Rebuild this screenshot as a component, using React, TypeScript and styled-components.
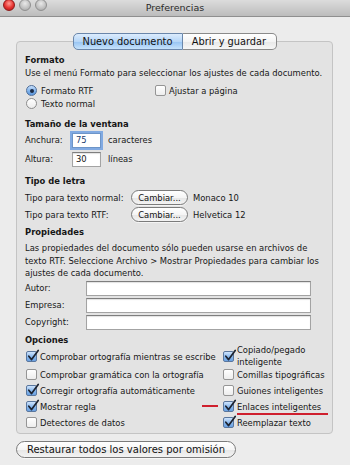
import React from "react";
import styled, { createGlobalStyle, css } from "styled-components";

const FONT = `"DejaVu Sans", "Liberation Sans", Arial, sans-serif`;
const FS = 8.4;

const GlobalStyle = createGlobalStyle`
  html, body { margin: 0; padding: 0; background: #ececec; }
  body { font-family: ${FONT}; color: #161616; }
  * { box-sizing: border-box; }
`;

const Window = styled.div`
  width: 350px;
  height: 465px;
  overflow: hidden;
  display: flex;
  flex-direction: column;
  background: #ececec;
  font-size: ${FS}px;
`;

const TitleBar = styled.div`
  height: 17px;
  flex: none;
  display: grid;
  grid-template-columns: 1fr auto 1fr;
  align-items: center;
  background: linear-gradient(#dcdcdc, #bcbcbc);
  border-bottom: 1px solid #8f8f8f;
`;

const Lights = styled.div`
  display: flex;
  gap: 4px;
  padding-left: 3px;
  align-self: start;
  margin-top: -1px;
`;

const Light = styled.span<{ $red?: boolean }>`
  width: 12px;
  height: 12px;
  border-radius: 50%;
  border: 1px solid ${(p) => (p.$red ? "#8e1a1a" : "#8f8f8f")};
  background: ${(p) =>
    p.$red
      ? "radial-gradient(circle at 50% 35%, #ff9c94, #e5312f 55%, #a8171a)"
      : "radial-gradient(circle at 50% 35%, #e9e9e9, #bfbfbf 60%, #a3a3a3)"};
`;

const Title = styled.div`
  font-size: 9.5px;
  color: #2a2a2a;
  padding-bottom: 1px;
`;

const Body = styled.div`
  flex: 1;
  display: flex;
  flex-direction: column;
  padding: 16px 17px 0 16px;
`;

const Tabs = styled.div`
  display: flex;
  justify-content: center;
  position: relative;
  z-index: 1;
  margin-bottom: -9px;
`;

const Tab = styled.div<{ $active?: boolean; $w: number }>`
  width: ${(p) => p.$w}px;
  height: 17px;
  display: flex;
  align-items: center;
  justify-content: center;
  font-size: 9.8px;
  color: #111;
  white-space: nowrap;
  border: 1px solid #8a8a8a;
  background: linear-gradient(#ffffff, #f4f4f4 50%, #e8e8e8 51%, #f6f6f6);
  &:first-child {
    border-radius: 5px 0 0 5px;
  }
  &:last-child {
    border-radius: 0 5px 5px 0;
    border-left: none;
  }
  ${(p) =>
    p.$active &&
    css`
      background: linear-gradient(#dcecfd, #b6d6f7 50%, #96c3f2 51%, #c6e2fb);
      border-color: #6a86aa;
    `}
`;

const GroupBox = styled.div`
  border: 1px solid #c4c4c4;
  border-radius: 4px;
  background: #e3e3e3;
  padding: 12px 8px 2px 8px;
  display: flex;
  flex-direction: column;
`;

const Heading = styled.div<{ $mt?: number }>`
  font-weight: bold;
  line-height: 13px;
  margin-top: ${(p) => p.$mt ?? 0}px;
`;

const Text = styled.div<{ $mt?: number; $lh?: number }>`
  line-height: ${(p) => p.$lh ?? 13}px;
  margin-top: ${(p) => p.$mt ?? 0}px;
`;

const RadioGrid = styled.div`
  display: grid;
  grid-template-columns: 129px 1fr;
  grid-auto-rows: 13px;
  margin-top: 4px;
  padding-left: 1px;
  align-items: center;
`;

const Option = styled.div<{ $gap?: number }>`
  display: flex;
  align-items: center;
  gap: ${(p) => p.$gap ?? 3}px;
  white-space: nowrap;
  position: relative;
`;

const Radio = styled.span<{ $on?: boolean }>`
  width: 11px;
  height: 11px;
  flex: none;
  border-radius: 50%;
  border: 1px solid ${(p) => (p.$on ? "#4f6e99" : "#8d8d8d")};
  background: ${(p) =>
    p.$on
      ? "linear-gradient(#c8e0fb, #7fb2ec 55%, #5b96dc)"
      : "linear-gradient(#ffffff, #ececec)"};
  display: flex;
  align-items: center;
  justify-content: center;
  &::after {
    content: "";
    width: 4px;
    height: 4px;
    border-radius: 50%;
    background: #1b2a44;
    display: ${(p) => (p.$on ? "block" : "none")};
  }
`;

const Box = styled.span<{ $on?: boolean }>`
  width: 11px;
  height: 11px;
  flex: none;
  position: relative;
  border-radius: 2px;
  border: 1px solid ${(p) => (p.$on ? "#5a779e" : "#959595")};
  background: ${(p) =>
    p.$on
      ? "linear-gradient(#cfe4fc, #86b7ee 55%, #6aa1e2)"
      : "linear-gradient(#ffffff, #ededed)"};
`;

const Tick = styled.svg`
  position: absolute;
  left: 0px;
  top: -3px;
  width: 12px;
  height: 13px;
  overflow: visible;
`;

const Checkbox = ({ on }: { on?: boolean }) => (
  <Box $on={on}>
    {on && (
      <Tick viewBox="0 0 12 13">
        <path
          d="M1.8 7.2 L4.6 10.6 L11.2 1.4"
          fill="none"
          stroke="#1d2330"
          strokeWidth="1.7"
          strokeLinecap="round"
          strokeLinejoin="round"
        />
      </Tick>
    )}
  </Box>
);

const FieldRow = styled.div<{ $mt: number }>`
  display: grid;
  grid-template-columns: 47px 29px auto;
  align-items: center;
  height: 16px;
  margin-top: ${(p) => p.$mt}px;
`;

const Unit = styled.span`
  margin-left: 7px;
`;

const Input = styled.input<{ $focus?: boolean }>`
  width: 100%;
  height: 15px;
  margin: 0;
  padding: 0 3px;
  font-family: ${FONT};
  font-size: ${FS}px;
  color: #161616;
  background: #fff;
  border: 1px solid #a3a3a3;
  border-top-color: #7e7e7e;
  border-radius: 0;
  outline: none;
  box-shadow: inset 0 1px 1px rgba(0, 0, 0, 0.12);
  ${(p) =>
    p.$focus &&
    css`
      color: #22406e;
      border-color: #6d95c8;
      box-shadow: 0 0 0 2px rgba(112, 160, 226, 0.85);
    `}
`;

const FontGrid = styled.div`
  display: grid;
  grid-template-columns: 101px 57px 1fr;
  grid-auto-rows: 15px;
  column-gap: 5px;
  row-gap: 2px;
  align-items: center;
  margin-top: 2px;
  white-space: nowrap;
`;

const Pill = styled.div<{ $large?: boolean }>`
  height: ${(p) => (p.$large ? 17 : 15)}px;
  width: ${(p) => (p.$large ? "220px" : "100%")};
  display: flex;
  align-items: center;
  justify-content: center;
  font-size: ${(p) => (p.$large ? 10 : FS)}px;
  color: #111;
  border: 1px solid #7b7b7b;
  border-radius: 9px;
  background: linear-gradient(#ffffff, #f5f5f5 50%, #e6e6e6 51%, #f3f3f3);
  box-shadow: 0 1px 0 rgba(255, 255, 255, 0.6);
  white-space: nowrap;
`;

const PropGrid = styled.div`
  display: grid;
  grid-template-columns: 61px 225px;
  grid-auto-rows: 15px;
  row-gap: 2px;
  align-items: center;
  margin-top: 1px;
`;

const OptionsGrid = styled.div`
  display: grid;
  grid-template-columns: 197px 1fr;
  grid-template-rows: 20px repeat(4, 16px);
  align-items: center;
  padding-left: 1px;
`;

const TwoLine = styled.span`
  line-height: 11.5px;
`;

const Marked = styled.span`
  display: inline-block;
  line-height: 12px;
  padding-right: 7px;
  border-bottom: 2px solid #cf1f2e;
  margin-top: 2px;
`;

const RedDash = styled.span`
  position: absolute;
  left: -21px;
  top: 50%;
  width: 16px;
  height: 2px;
  margin-top: -2px;
  background: #cf1f2e;
`;

const Footer = styled.div`
  margin-top: 7px;
  display: flex;
`;

const leftOptions: [string, boolean][] = [
  ["Comprobar ortografía mientras se escribe", true],
  ["Comprobar gramática con la ortografía", false],
  ["Corregir ortografía automáticamente", true],
  ["Mostrar regla", true],
  ["Detectores de datos", false],
];

export default function App() {
  return (
    <>
      <GlobalStyle />
      <Window>
        <TitleBar>
          <Lights>
            <Light $red />
            <Light />
            <Light />
          </Lights>
          <Title>Preferencias</Title>
          <span />
        </TitleBar>
        <Body>
          <Tabs>
            <Tab $active $w={110}>Nuevo documento</Tab>
            <Tab $w={94}>Abrir y guardar</Tab>
          </Tabs>
          <GroupBox>
            <Heading>Formato</Heading>
            <Text>Use el menú Formato para seleccionar los ajustes de cada documento.</Text>
            <RadioGrid>
              <Option $gap={4}>
                <Radio $on />
                Formato RTF
              </Option>
              <Option>
                <Checkbox />
                Ajustar a página
              </Option>
              <Option $gap={4}>
                <Radio />
                Texto normal
              </Option>
            </RadioGrid>

            <Heading $mt={8}>Tamaño de la ventana</Heading>
            <FieldRow $mt={1}>
              <span>Anchura:</span>
              <Input $focus readOnly value="75" />
              <Unit>caracteres</Unit>
            </FieldRow>
            <FieldRow $mt={3}>
              <span>Altura:</span>
              <Input readOnly value="30" />
              <Unit>líneas</Unit>
            </FieldRow>

            <Heading $mt={8}>Tipo de letra</Heading>
            <FontGrid>
              <span>Tipo para texto normal:</span>
              <Pill>Cambiar...</Pill>
              <span>Monaco 10</span>
              <span>Tipo para texto RTF:</span>
              <Pill>Cambiar...</Pill>
              <span>Helvetica 12</span>
            </FontGrid>

            <Heading $mt={4}>Propiedades</Heading>
            <Text $mt={3} $lh={12.5}>
              Las propiedades del documento sólo pueden usarse en archivos de texto RTF. Seleccione
              Archivo &gt; Mostrar Propiedades para cambiar los ajustes de cada documento.
            </Text>
            <PropGrid>
              <span>Autor:</span>
              <Input readOnly value="" />
              <span>Empresa:</span>
              <Input readOnly value="" />
              <span>Copyright:</span>
              <Input readOnly value="" />
            </PropGrid>

            <Heading $mt={4}>Opciones</Heading>
            <OptionsGrid>
              <Option>
                <Checkbox on={leftOptions[0][1]} />
                {leftOptions[0][0]}
              </Option>
              <Option>
                <Checkbox on />
                <TwoLine>
                  Copiado/pegado
                  <br />
                  inteligente
                </TwoLine>
              </Option>
              <Option>
                <Checkbox on={leftOptions[1][1]} />
                {leftOptions[1][0]}
              </Option>
              <Option>
                <Checkbox />
                Comillas tipográficas
              </Option>
              <Option>
                <Checkbox on={leftOptions[2][1]} />
                {leftOptions[2][0]}
              </Option>
              <Option>
                <Checkbox />
                Guiones inteligentes
              </Option>
              <Option>
                <Checkbox on={leftOptions[3][1]} />
                {leftOptions[3][0]}
              </Option>
              <Option>
                <RedDash />
                <Checkbox on />
                <Marked>Enlaces inteligentes</Marked>
              </Option>
              <Option>
                <Checkbox on={leftOptions[4][1]} />
                {leftOptions[4][0]}
              </Option>
              <Option>
                <Checkbox on />
                Reemplazar texto
              </Option>
            </OptionsGrid>
          </GroupBox>
          <Footer>
            <Pill $large>Restaurar todos los valores por omisión</Pill>
          </Footer>
        </Body>
      </Window>
    </>
  );
}
